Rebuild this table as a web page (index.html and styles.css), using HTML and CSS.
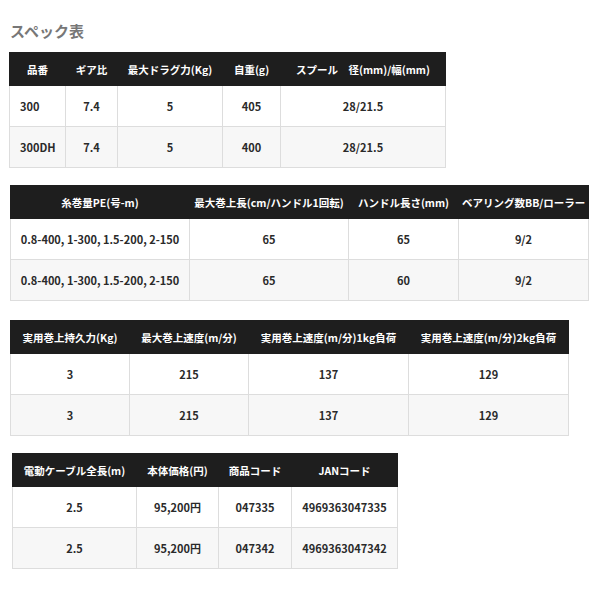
FILE: index.html
```html
<!DOCTYPE html>
<html lang="ja">
<head>
<meta charset="utf-8">
<link rel="stylesheet" href="styles.css">
</head>
<body>
<div class="page">
  <h2 class="title">スペック表</h2>

  <table class="spec t1">
    <colgroup><col class="c1-1"><col class="c1-2"><col class="c1-3"><col class="c1-4"><col class="c1-5"></colgroup>
    <thead><tr><th>品番</th><th>ギア比</th><th>最大ドラグ力(Kg)</th><th>自重(g)</th><th>スプール　径(mm)/幅(mm)</th></tr></thead>
    <tbody>
      <tr><td class="left">300</td><td>7.4</td><td>5</td><td>405</td><td>28/21.5</td></tr>
      <tr class="alt"><td class="left">300DH</td><td>7.4</td><td>5</td><td>400</td><td>28/21.5</td></tr>
    </tbody>
  </table>

  <table class="spec t2">
    <colgroup><col class="c2-1"><col class="c2-2"><col class="c2-3"><col class="c2-4"></colgroup>
    <thead><tr><th>糸巻量PE(号-m)</th><th>最大巻上長(cm/ハンドル1回転)</th><th>ハンドル長さ(mm)</th><th class="clip">ベアリング数BB/ローラー</th></tr></thead>
    <tbody>
      <tr><td>0.8-400, 1-300, 1.5-200, 2-150</td><td>65</td><td>65</td><td>9/2</td></tr>
      <tr class="alt"><td>0.8-400, 1-300, 1.5-200, 2-150</td><td>65</td><td>60</td><td>9/2</td></tr>
    </tbody>
  </table>

  <table class="spec t3">
    <colgroup><col class="c3-1"><col class="c3-2"><col class="c3-3"><col class="c3-4"></colgroup>
    <thead><tr><th>実用巻上持久力(Kg)</th><th>最大巻上速度(m/分)</th><th>実用巻上速度(m/分)1kg負荷</th><th>実用巻上速度(m/分)2kg負荷</th></tr></thead>
    <tbody>
      <tr><td>3</td><td>215</td><td>137</td><td>129</td></tr>
      <tr class="alt"><td>3</td><td>215</td><td>137</td><td>129</td></tr>
    </tbody>
  </table>

  <table class="spec t4">
    <colgroup><col class="c4-1"><col class="c4-2"><col class="c4-3"><col class="c4-4"></colgroup>
    <thead><tr><th>電動ケーブル全長(m)</th><th>本体価格(円)</th><th>商品コード</th><th>JANコード</th></tr></thead>
    <tbody>
      <tr><td>2.5</td><td>95,200円</td><td>047335</td><td>4969363047335</td></tr>
      <tr class="alt"><td>2.5</td><td>95,200円</td><td>047342</td><td>4969363047342</td></tr>
    </tbody>
  </table>
</div>
</body>
</html>
```

FILE: styles.css
```css
html, body {
  margin: 0;
  padding: 0;
  background: #ffffff;
}
body {
  font-family: "Noto Sans CJK JP", "Noto Sans", sans-serif;
  color: #333333;
}
.page {
  padding: 22px 0 0 9px;
}
.title {
  margin: 0 0 12px 1px;
  font-size: 15px;
  line-height: 18px;
  font-weight: 700;
  color: #777777;
}
.spec {
  border-collapse: collapse;
  table-layout: fixed;
  margin-bottom: 18px;
  font-size: 11px;
  font-weight: 700;
}
.spec th {
  background: #1e1e1e;
  color: #ffffff;
  height: 32px;
  padding: 0 3px;
  font-size: 10.5px;
  font-weight: 700;
  text-align: center;
  white-space: nowrap;
  overflow: hidden;
  border: 1px solid #1e1e1e;
}
.spec td {
  height: 40px;
  padding: 0 3px;
  text-align: center;
  border: 1px solid #dddddd;
  white-space: nowrap;
  color: #2a2a2a;
}
.spec tr.alt td {
  background: #f7f7f7;
}
.spec td.left {
  text-align: left;
  padding-left: 10px;
}
.spec th.clip {
  text-overflow: clip;
}
.t1 { width: 436px; margin-bottom: 17px; }
.c1-1 { width: 56px; }
.c1-2 { width: 52px; }
.c1-3 { width: 105px; }
.c1-4 { width: 58px; }
.c1-5 { width: 165px; }

.t2 { width: 578px; margin-left: 1px; margin-bottom: 19px; }
.c2-1 { width: 179px; }
.c2-2 { width: 159px; }
.c2-3 { width: 110px; }
.c2-4 { width: 130px; }

.t3 { width: 558px; margin-left: 1px; margin-bottom: 17px; }
.c3-1 { width: 119px; }
.c3-2 { width: 119px; }
.c3-3 { width: 160px; }
.c3-4 { width: 160px; }

.t4 { width: 385px; margin-left: 3px; }
.c4-1 { width: 124px; }
.c4-2 { width: 82px; }
.c4-3 { width: 73px; }
.c4-4 { width: 106px; }
```
